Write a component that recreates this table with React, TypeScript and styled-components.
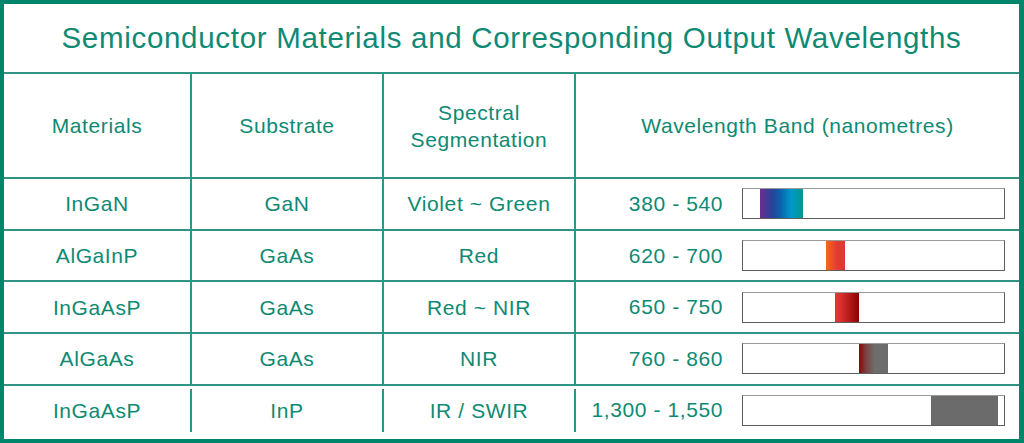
import styled, { createGlobalStyle } from "styled-components";

const GlobalStyle = createGlobalStyle`
  html, body {
    margin: 0;
    padding: 0;
    background: #ffffff;
  }
  body {
    font-family: "Liberation Sans", Arial, Helvetica, sans-serif;
  }
`;

const green = "#00876b";
const line = "#2f9484";
const text = "#0e8a74";

type Band = {
  material: string;
  substrate: string;
  segment: string;
  range: string;
  left: number;
  width: number;
  fill: string;
};

const bands: Band[] = [
  {
    material: "InGaN",
    substrate: "GaN",
    segment: "Violet ~ Green",
    range: "380 - 540",
    left: 6.5,
    width: 16.4,
    fill: "linear-gradient(to right, #6b2e8e 0%, #25449a 30%, #0a62ad 48%, #0099cc 72%, #00988a 100%)",
  },
  {
    material: "AlGaInP",
    substrate: "GaAs",
    segment: "Red",
    range: "620 - 700",
    left: 31.7,
    width: 7.2,
    fill: "linear-gradient(to right, #f4691f 0%, #e23b31 60%, #e03733 100%)",
  },
  {
    material: "InGaAsP",
    substrate: "GaAs",
    segment: "Red ~ NIR",
    range: "650 - 750",
    left: 35.1,
    width: 9.1,
    fill: "linear-gradient(to right, #e23636 0%, #d92f2f 25%, #8a0303 100%)",
  },
  {
    material: "AlGaAs",
    substrate: "GaAs",
    segment: "NIR",
    range: "760 - 860",
    left: 44.2,
    width: 11.1,
    fill: "linear-gradient(to right, #8a0606 0%, #7a4444 25%, #6e6e6e 55%, #6b6b6b 100%)",
  },
  {
    material: "InGaAsP",
    substrate: "InP",
    segment: "IR / SWIR",
    range: "1,300 - 1,550",
    left: 71.8,
    width: 26,
    fill: "#6b6b6b",
  },
];

export default function App() {
  return (
    <>
      <GlobalStyle />
      <Frame>
        <Title>Semiconductor Materials and Corresponding Output Wavelengths</Title>
        <Table>
          <HeadRow>
            <Cell>Materials</Cell>
            <Cell>Substrate</Cell>
            <Cell>
              Spectral
              <br />
              Segmentation
            </Cell>
            <Cell $last>Wavelength Band (nanometres)</Cell>
          </HeadRow>
          {bands.map((b, i) => (
            <Row key={i} $last={i === bands.length - 1}>
              <Cell>{b.material}</Cell>
              <Cell>{b.substrate}</Cell>
              <Cell>{b.segment}</Cell>
              <BandCell>
                <Range>{b.range}</Range>
                <Bar>
                  <Fill style={{ left: `${b.left}%`, width: `${b.width}%`, background: b.fill }} />
                </Bar>
              </BandCell>
            </Row>
          ))}
        </Table>
      </Frame>
    </>
  );
}

//>>>>StyledComponents<<<<\\

const Frame = styled.div`
  box-sizing: border-box;
  width: 1024px;
  height: 443px;
  border-style: solid;
  border-color: ${green};
  border-width: 4px 5px 4px 4px;
  padding-bottom: 7px;
  display: flex;
  flex-direction: column;
  background: #ffffff;
`;

const Title = styled.div`
  height: 68px;
  flex-shrink: 0;
  border-bottom: 2px solid ${line};
  display: flex;
  align-items: center;
  justify-content: center;
  color: ${text};
  font-size: 29.5px;
  letter-spacing: 0.7px;
`;

const Table = styled.div`
  flex: 1;
  display: flex;
  flex-direction: column;
`;

const columns = "188px 192px 192px 1fr";

const HeadRow = styled.div`
  display: grid;
  grid-template-columns: ${columns};
  height: 103px;
  flex-shrink: 0;
  border-bottom: 2px solid ${line};
`;

const Row = styled.div<{ $last?: boolean }>`
  display: grid;
  grid-template-columns: ${columns};
  height: ${(p) => (p.$last ? "auto" : "49.7px")};
  flex: ${(p) => (p.$last ? "1" : "none")};
  border-bottom: ${(p) => (p.$last ? "none" : `2px solid ${line}`)};
  padding-top: ${(p) => (p.$last ? "3px" : "0")};
`;

const Cell = styled.div<{ $last?: boolean }>`
  display: flex;
  align-items: center;
  justify-content: center;
  text-align: center;
  color: ${text};
  font-size: 21px;
  letter-spacing: 0.6px;
  line-height: 27px;
  border-right: ${(p) => (p.$last ? "none" : `2px solid ${line}`)};
`;

const BandCell = styled.div`
  display: flex;
  align-items: center;
  padding-right: 14px;
`;

const Range = styled.div`
  width: 147px;
  text-align: right;
  color: ${text};
  font-size: 21px;
  letter-spacing: 0.6px;
  margin-right: -0.6px;
`;

const Bar = styled.div`
  position: relative;
  box-sizing: border-box;
  margin-left: 20px;
  flex: 1;
  height: 31px;
  border: 1px solid #5e5e5e;
  border-top-color: #9a9a9a;
  background: #ffffff;
`;

const Fill = styled.div`
  position: absolute;
  top: 0;
  bottom: 0;
`;
